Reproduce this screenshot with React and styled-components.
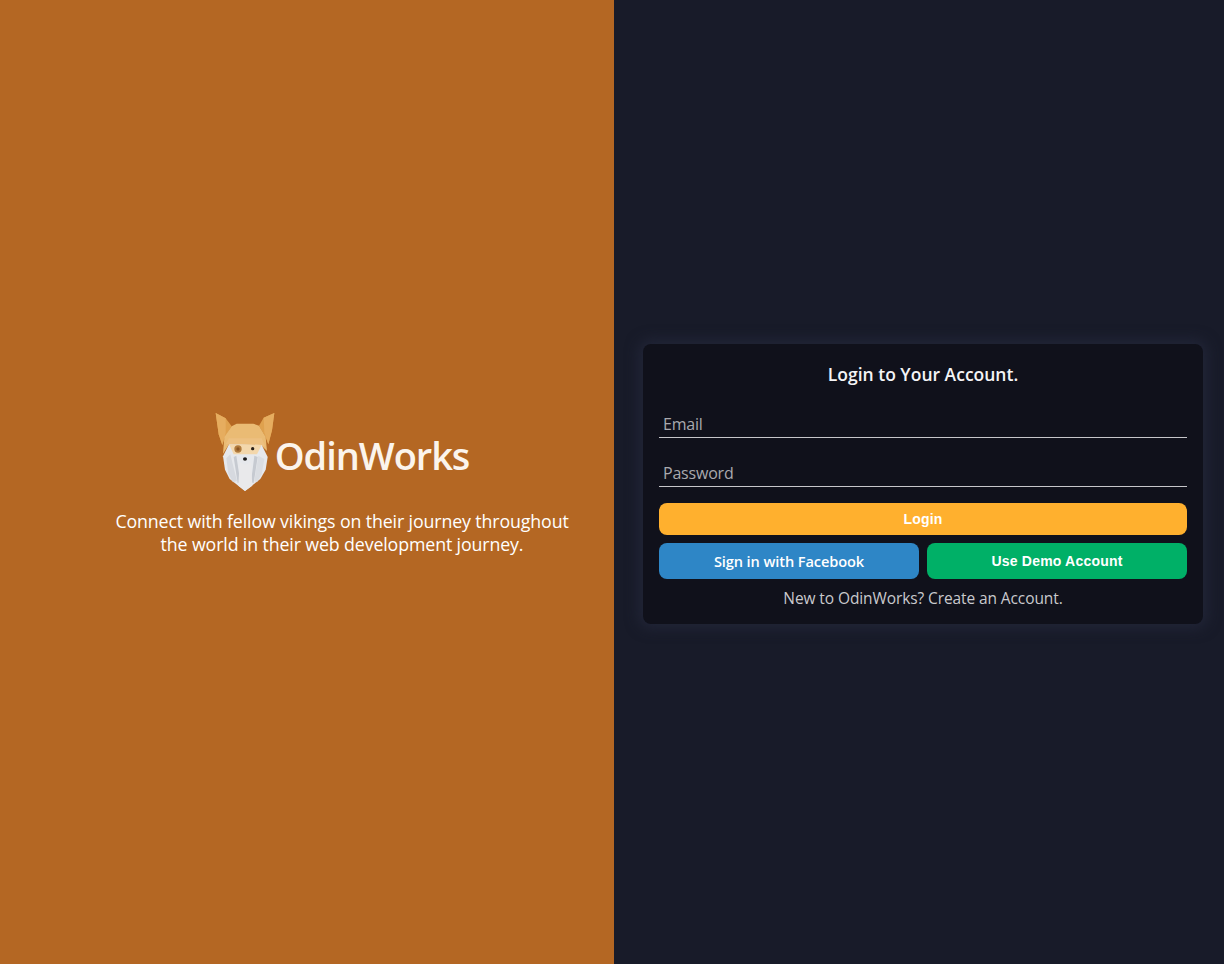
import React from 'react';
import styled, { createGlobalStyle } from 'styled-components';

const GlobalStyle = createGlobalStyle`
  html, body {
    margin: 0;
    padding: 0;
    background: #181b29;
  }
  * {
    box-sizing: border-box;
  }
`;

const Page = styled.div`
  display: grid;
  grid-template-columns: 614px 610px;
  height: 964px;
  font-family: 'Open Sans', 'Noto Sans', sans-serif;
`;

const BrandPanel = styled.section`
  display: flex;
  flex-direction: column;
  align-items: center;
  justify-content: center;
  background: #b46723;
  color: #fff;
  padding: 3px 0 0 70px;
`;

const BrandRow = styled.div`
  display: flex;
  align-items: center;
  margin-bottom: 18px;
`;

const BrandName = styled.h1`
  margin: 6px 0 0;
  font-size: 38px;
  line-height: 48px;
  font-weight: 600;
  letter-spacing: -1.05px;
  color: #fbf4ec;
`;

const Tagline = styled.p`
  margin: 0;
  width: 480px;
  font-size: 17.8px;
  line-height: 23px;
  text-align: center;
  letter-spacing: -0.13px;
`;

const FormPanel = styled.section`
  display: flex;
  align-items: center;
  justify-content: center;
  padding: 4px 21px 0 29px;
  background: #181b29;
`;

const Card = styled.form`
  width: 560px;
  padding: 16px 16px 14px;
  border-radius: 8px;
  background: #10111b;
  box-shadow: 0 0 14px 4px rgba(38, 42, 62, 0.75);
`;

const Title = styled.h2`
  margin: 0 0 20px;
  font-size: 17.5px;
  line-height: 28px;
  font-weight: 600;
  text-align: center;
  color: #f4f4f6;
`;

const Field = styled.input`
  display: block;
  width: 100%;
  height: 30px;
  margin-bottom: 19px;
  padding: 3px 4px 0;
  border: 0;
  border-bottom: 1px solid #c6c6ca;
  outline: none;
  background: transparent;
  color: #fff;
  font-family: inherit;
  font-size: 16px;
  letter-spacing: -0.2px;

  &::placeholder {
    color: #a9a9ae;
    opacity: 1;
  }
`;

const Button = styled.button`
  display: block;
  width: 100%;
  height: ${props => props.$height}px;
  border: 0;
  border-radius: 8px;
  background: ${props => props.$color};
  color: #fff;
  font-family: ${props => (props.$segoe ? "'Open Sans', sans-serif" : "'Liberation Sans', sans-serif")};
  font-size: ${props => (props.$segoe ? '14.6px' : '14px')};
  font-weight: ${props => (props.$segoe ? 600 : 700)};
  letter-spacing: ${props => (props.$segoe ? '-0.1px' : '0.2px')};
  padding: 0;
`;

const SubmitRow = styled.div`
  margin-top: -3px;
`;

const ButtonRow = styled.div`
  display: grid;
  grid-template-columns: 1fr 1fr;
  gap: 8px;
  margin-top: 8px;
`;

const SignUp = styled.p`
  margin: 7px 0 0;
  font-size: 15.5px;
  line-height: 24px;
  letter-spacing: -0.1px;
  text-align: center;
  color: #c9c9cd;
`;

const Logo = () => (
  <svg width="60" height="80" viewBox="30 25 180 240" aria-hidden="true">
    {/* horns */}
    <polygon points="32,28 62,44 80,68 60,100 52,124 41,92" fill="#dfa14e" />
    <polygon points="32,28 62,44 62,88 52,124 41,92" fill="#e6ad5f" />
    <polygon points="208,28 176,42 162,66 180,98 190,122 201,80" fill="#dfa14e" />
    <polygon points="208,28 176,42 178,86 190,122 201,80" fill="#e6ad5f" />
    {/* helmet */}
    <polygon points="80,68 95,60 145,60 162,66 182,100 186,142 170,126 72,122 54,150 58,100" fill="#eabb74" />
    <polygon points="62,122 72,104 170,104 180,128 170,126 72,122" fill="#edc080" />
    {/* beard */}
    <polygon points="72,122 170,124 188,160 182,198 166,226 120,262 74,226 60,198 54,158" fill="#e6e8ec" />
    <polygon points="72,122 170,124 156,152 86,152" fill="#f3d7ac" />
    <polygon points="64,164 76,152 96,232 84,236 70,210" fill="#d6d9df" />
    <polygon points="86,160 94,156 106,236 98,238" fill="#c6cad1" />
    <polygon points="148,156 158,160 146,238 138,236" fill="#c6cad1" />
    <polygon points="160,156 178,166 170,212 156,236 148,232" fill="#dadde2" />
    <polygon points="104,176 120,184 138,176 142,246 120,262 100,246" fill="#e9e9eb" />
    {/* eyes and nose */}
    <circle cx="99" cy="136" r="11" fill="#b07a3c" />
    <circle cx="99" cy="136" r="5" fill="#8c5523" />
    <circle cx="143" cy="135" r="5" fill="#2a2018" />
    <ellipse cx="120" cy="166" rx="6" ry="5" fill="#1c1a1a" />
  </svg>
);

export default function App() {
  return (
    <Page>
      <GlobalStyle />
      <BrandPanel>
        <BrandRow>
          <Logo />
          <BrandName>OdinWorks</BrandName>
        </BrandRow>
        <Tagline>
          Connect with fellow vikings on their journey throughout the world in their web development journey.
        </Tagline>
      </BrandPanel>
      <FormPanel>
        <Card onSubmit={e => e.preventDefault()}>
          <Title>Login to Your Account.</Title>
          <Field type="email" placeholder="Email" />
          <Field type="password" placeholder="Password" />
          <SubmitRow>
            <Button $height={32} $color="#ffb02e">Login</Button>
          </SubmitRow>
          <ButtonRow>
            <Button type="button" $height={36} $color="#2e86c6" $segoe>Sign in with Facebook</Button>
            <Button type="button" $height={36} $color="#00b067">Use Demo Account</Button>
          </ButtonRow>
          <SignUp>New to OdinWorks? Create an Account.</SignUp>
        </Card>
      </FormPanel>
    </Page>
  );
}
